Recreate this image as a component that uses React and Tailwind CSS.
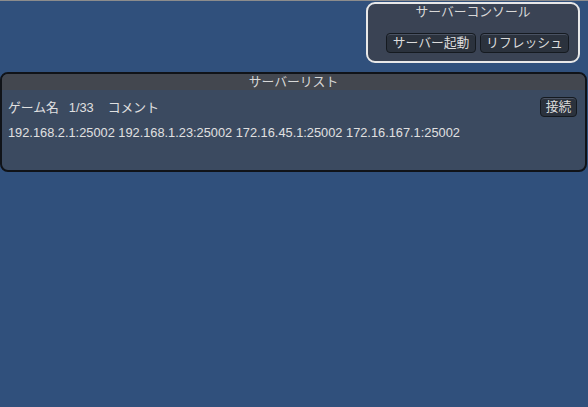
export default function App() {
  const font = { fontFamily: '"Liberation Sans", "Noto Sans CJK JP", sans-serif' };
  return (
    <div style={font} className="w-[588px] h-[407px] bg-[#30507c] overflow-hidden text-[12.8px] text-[#e0e0e0]">
      <div className="h-px bg-[#8c8c8c]" />
      <div className="flex justify-end pr-[8px] pt-px">
        <div className="w-[214px] h-[61px] border-2 border-[#e8e8e8] rounded-[9px] bg-[#3a4354] flex flex-col">
          <div className="text-center leading-[16px] text-[#d8d8d8]">サーバーコンソール</div>
          <div className="flex gap-[4px] pl-[18px] mt-[13px]">
            <button className="h-[20px] w-[90px] rounded-[4px] bg-[#2b323d] border border-[#151a20] leading-[18px] text-[#dcdcdc] shadow-[inset_0_1px_0_#4a5262]">サーバー起動</button>
            <button className="h-[20px] w-[89px] rounded-[4px] bg-[#2b323d] border border-[#151a20] leading-[18px] text-[#dcdcdc] shadow-[inset_0_1px_0_#4a5262]">リフレッシュ</button>
          </div>
        </div>
      </div>
      <div className="mt-[9px] w-[587px] h-[100px] border-2 border-[#101318] rounded-[8px] bg-[#3b4a60] overflow-hidden flex flex-col">
        <div className="h-[16px] bg-[#43474f] text-center leading-[16px] text-[#d8d8d8]">サーバーリスト</div>
        <div className="flex items-center pl-[6px] pr-[8px] mt-[7px] h-[20px]">
          <span className="mt-[2px]">ゲーム名</span>
          <span className="ml-[10px] mt-[2px]">1/33</span>
          <span className="ml-[14px] mt-[2px]">コメント</span>
          <button className="ml-auto h-[20px] w-[37px] rounded-[4px] bg-[#2b323d] border border-[#151a20] leading-[18px] text-[#dcdcdc] shadow-[inset_0_1px_0_#4a5262]">接続</button>
        </div>
        <div className="pl-[6px] mt-[8px] leading-[16px]">192.168.2.1:25002 192.168.1.23:25002 172.16.45.1:25002 172.16.167.1:25002</div>
      </div>
    </div>
  );
}
